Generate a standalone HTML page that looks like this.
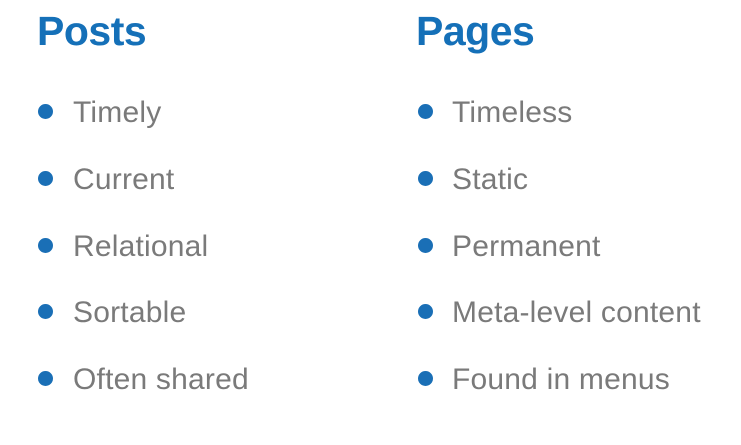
<!DOCTYPE html>
<html><head><meta charset="utf-8"><style>
html,body{margin:0;padding:0;background:#fff;width:741px;height:445px;overflow:hidden;position:relative;font-family:"Liberation Sans",sans-serif}
.h{position:absolute;font-size:41px;line-height:41px;font-weight:bold;color:#1570b8;top:11px;letter-spacing:-0.5px}
.t{position:absolute;font-size:30px;line-height:30px;color:#7a7a7a;white-space:nowrap;letter-spacing:0.2px}
.b{position:absolute;width:15px;height:15px;border-radius:50%;background:#1a6fb6}
</style></head><body>
<div class="h" style="left:37px">Posts</div>
<div class="h" style="left:416px">Pages</div>

<div class="b" style="left:38px;top:104px"></div><div class="t" style="left:73px;top:98px">Timely</div>
<div class="b" style="left:38px;top:171px"></div><div class="t" style="left:73px;top:165px">Current</div>
<div class="b" style="left:38px;top:238px"></div><div class="t" style="left:73px;top:232px">Relational</div>
<div class="b" style="left:38px;top:304px"></div><div class="t" style="left:73px;top:298px">Sortable</div>
<div class="b" style="left:38px;top:371px"></div><div class="t" style="left:73px;top:365px">Often shared</div>

<div class="b" style="left:418px;top:104px"></div><div class="t" style="left:452px;top:98px">Timeless</div>
<div class="b" style="left:418px;top:171px"></div><div class="t" style="left:452px;top:165px">Static</div>
<div class="b" style="left:418px;top:238px"></div><div class="t" style="left:452px;top:232px">Permanent</div>
<div class="b" style="left:418px;top:304px"></div><div class="t" style="left:452px;top:298px">Meta-level content</div>
<div class="b" style="left:418px;top:371px"></div><div class="t" style="left:452px;top:365px">Found in menus</div>
</body></html>
